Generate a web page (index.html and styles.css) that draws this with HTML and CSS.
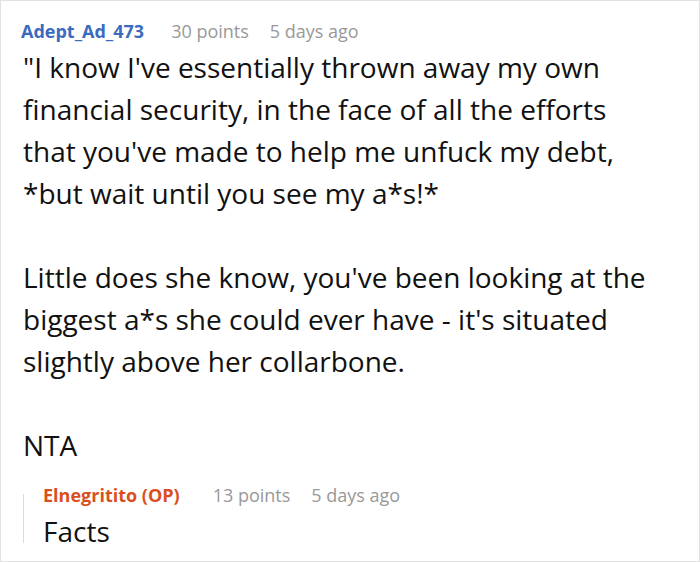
FILE: index.html
```html
<!DOCTYPE html>
<html>
<head>
<meta charset="utf-8">
<link rel="stylesheet" href="styles.css">
</head>
<body>
<div class="comment">
  <div class="meta">
    <span class="author">Adept_Ad_473</span>
    <span class="info">30 points</span>
    <span class="info">5 days ago</span>
  </div>
  <div class="body">
    <p>"I know I've essentially thrown away my own financial security, in the face of all the efforts that you've made to help me unfuck my debt, *but wait until you see my a*s!*</p>
    <p>Little does she know, you've been looking at the biggest a*s she could ever have - it's situated slightly above her collarbone.</p>
    <p>NTA</p>
  </div>
  <div class="reply">
    <div class="meta">
      <span class="author op">Elnegritito (OP)</span>
      <span class="info">13 points</span>
      <span class="info">5 days ago</span>
    </div>
    <div class="body">
      <p>Facts</p>
    </div>
  </div>
</div>
</body>
</html>
```

FILE: styles.css
```css
html, body {
  margin: 0;
  padding: 0;
  background: #fff;
}
body {
  font-family: "Open Sans", "Noto Sans", sans-serif;
}
.comment {
  box-sizing: border-box;
  width: 700px;
  height: 562px;
  border: 1px solid #e2e2e2;
  padding: 17px 20px 0 20px;
  overflow: hidden;
}
.meta {
  display: flex;
  align-items: baseline;
  gap: 21px;
  font-size: 18px;
  line-height: 26px;
}
.author {
  font-weight: 700;
  color: #3a6bbf;
  margin-right: 6px;
}
.author.op {
  color: #d9501f;
  margin-right: 12px;
}
.info {
  color: #999;
}
.body {
  font-size: 28px;
  line-height: 42px;
  color: #111;
  padding-left: 2px;
  margin-top: 2px;
}
.body p {
  margin: 0 0 42px 0;
  max-width: 640px;
}
.body p:last-child {
  margin-bottom: 0;
}
.reply {
  position: relative;
  margin-top: 16px;
  margin-left: 2px;
  padding-left: 20px;
}
.reply::before {
  content: "";
  position: absolute;
  left: 0;
  top: 12px;
  bottom: 9px;
  width: 1px;
  background: #dcdcdc;
}
.reply .body {
  padding-left: 0;
}
```
